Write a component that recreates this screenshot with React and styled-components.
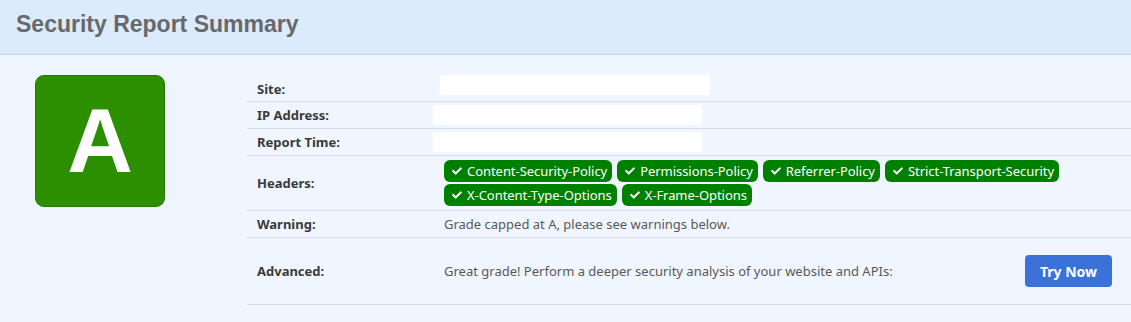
import React from "react";
import styled, { createGlobalStyle } from "styled-components";

const Global = createGlobalStyle`
  html, body { margin: 0; padding: 0; background: #eff6ff; }
  body { font-family: "Noto Sans", "Open Sans", sans-serif; }
`;

const Page = styled.div`
  width: 1131px;
  height: 322px;
  background: #eff6ff;
  overflow: hidden;
`;

const Header = styled.div`
  height: 54px;
  background: #dcebfb;
  border-bottom: 1px solid #c9d5e1;
  display: flex;
  align-items: center;
  padding-left: 16px;
  box-sizing: content-box;
`;

const Title = styled.h1`
  margin: 0;
  font-family: "Liberation Sans", Arial, sans-serif;
  font-weight: 700;
  font-size: 23px;
  color: #67686d;
  letter-spacing: 0;
  transform: translateY(-3px);
`;

const Content = styled.div`
  display: flex;
  align-items: flex-start;
  padding: 20px 0 0 35px;
  gap: 82px;
`;

const Grade = styled.div`
  width: 128px;
  height: 128px;
  flex: none;
  background: #2b8f00;
  border: 1px solid #277800;
  border-radius: 9px;
  display: flex;
  align-items: center;
  justify-content: center;
  color: #fff;
  font-family: "Liberation Sans", Arial, sans-serif;
  font-weight: 700;
  font-size: 91px;
  line-height: 1;
  padding-bottom: 2px;
  box-sizing: content-box;
`;

const Table = styled.table`
  flex: 1;
  border-collapse: collapse;
  font-size: 13px;
  line-height: 18px;
`;

const Row = styled.tr`
  border-bottom: 1px solid #d9dde2;
`;

const Label = styled.th`
  width: 167px;
  height: 18px;
  text-align: left;
  font-weight: 700;
  color: #3a3a3a;
  padding: ${(p) => (p.$tall ? "17px" : p.$short ? "4px 10px 3px" : "4px")} 10px;
  vertical-align: middle;
`;

const Value = styled.td`
  color: #595959;
  padding: ${(p) => (p.$tall ? "17px 19px 17px 10px" : "4px 10px")};
  vertical-align: middle;
`;

const Redacted = styled.span`
  display: block;
  width: ${(p) => p.$w}px;
  height: 20px;
  background: #ffffff;
  margin-left: ${(p) => p.$dx}px;
  margin-top: ${(p) => p.$dy - 1}px;
  margin-bottom: ${(p) => -p.$dy - 1}px;
`;

const Badges = styled.div`
  display: flex;
  flex-wrap: wrap;
  gap: 2px 5px;
  max-width: 640px;
`;

const Badge = styled.span`
  display: inline-flex;
  align-items: center;
  gap: 5px;
  height: 22px;
  padding: 0 5px 0 8px;
  background: #008000;
  color: #fff;
  border-radius: 6px;
  font-size: 13px;
  letter-spacing: -0.05px;
  white-space: nowrap;
`;

const Advanced = styled.div`
  display: flex;
  align-items: center;
  justify-content: space-between;
`;

const Button = styled.button`
  height: 32px;
  padding: 0 15px;
  border: none;
  border-radius: 4px;
  background: #3b72d9;
  color: #fff;
  font-family: "Noto Sans", sans-serif;
  font-weight: 700;
  font-size: 14px;
  cursor: pointer;
`;

const Check = () => (
  <svg width="10" height="10" viewBox="0 0 512 512" fill="#fff" aria-hidden="true">
    <path d="M173.898 439.404l-166.4-166.4c-9.997-9.997-9.997-26.206 0-36.204l36.203-36.204c9.997-9.998 26.207-9.998 36.204 0L192 312.69 432.095 72.596c9.997-9.997 26.207-9.997 36.204 0l36.203 36.204c9.997 9.997 9.997 26.206 0 36.204l-294.4 294.401c-9.998 9.997-26.207 9.997-36.204-.001z" />
  </svg>
);

const headers = [
  "Content-Security-Policy",
  "Permissions-Policy",
  "Referrer-Policy",
  "Strict-Transport-Security",
  "X-Content-Type-Options",
  "X-Frame-Options",
];

export default function App() {
  return (
    <>
      <Global />
      <Page>
        <Header>
          <Title>Security Report Summary</Title>
        </Header>
        <Content>
          <Grade>A</Grade>
          <Table>
            <tbody>
              <Row>
                <Label $short>Site:</Label>
                <Value>
                  <Redacted $w={270} $dx={-4} $dy={-3} />
                </Value>
              </Row>
              <Row>
                <Label>IP Address:</Label>
                <Value>
                  <Redacted $w={269} $dx={-11} $dy={0} />
                </Value>
              </Row>
              <Row>
                <Label>Report Time:</Label>
                <Value>
                  <Redacted $w={269} $dx={-11} $dy={0} />
                </Value>
              </Row>
              <Row>
                <Label>Headers:</Label>
                <Value>
                  <Badges>
                    {headers.map((h) => (
                      <Badge key={h}>
                        <Check />
                        {h}
                      </Badge>
                    ))}
                  </Badges>
                </Value>
              </Row>
              <Row>
                <Label>Warning:</Label>
                <Value>Grade capped at A, please see warnings below.</Value>
              </Row>
              <Row>
                <Label $tall>Advanced:</Label>
                <Value $tall>
                  <Advanced>
                    <span>Great grade! Perform a deeper security analysis of your website and APIs:</span>
                    <Button>Try Now</Button>
                  </Advanced>
                </Value>
              </Row>
            </tbody>
          </Table>
        </Content>
      </Page>
    </>
  );
}
